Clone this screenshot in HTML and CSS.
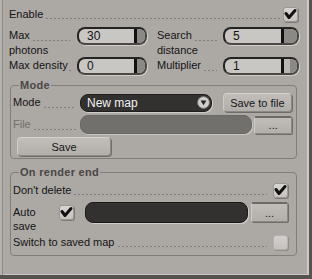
FILE: index.html
```html
<!DOCTYPE html>
<html>
<head>
<meta charset="utf-8">
<link rel="stylesheet" href="styles.css">
</head>
<body>
<div class="window">
  <div class="top">
    <div class="row enable-row">
      <span class="lbl">Enable</span><span class="leader lead-enable"></span>
      <span class="cb checked"><svg viewBox="0 0 15 15" width="15" height="15"><path d="M3 6.5 L6 10.5 L12 3.5" fill="none" stroke="#111" stroke-width="3" stroke-linejoin="round" stroke-linecap="round"/></svg></span>
    </div>
    <div class="grid">
      <div class="lbl2"><div class="l1"><span class="txt">Max</span><span class="leader lead-grid"></span></div><div class="l2">photons</div></div>
      <div class="spin spin-a"><span class="val">30</span><span class="bar"></span><span class="knob"></span></div>
      <div class="lbl2 col3"><div class="l1"><span class="txt">Search</span><span class="leader lead-grid"></span></div><div class="l2">distance</div></div>
      <div class="spin spin-b"><span class="val">5</span><span class="bar"></span><span class="knob"></span></div>

      <div class="lbl1"><span class="txt">Max density</span><span class="leader lead-grid"></span></div>
      <div class="spin spin-a"><span class="val">0</span><span class="bar"></span><span class="knob"></span></div>
      <div class="lbl1 col3"><span class="txt">Multiplier</span><span class="leader lead-grid"></span></div>
      <div class="spin spin-b"><span class="val">1</span><span class="bar"></span><span class="knob light"></span></div>
    </div>
  </div>

  <fieldset class="group mode-group">
    <legend>Mode</legend>
    <div class="grow">
      <div class="glabel"><span class="txt">Mode</span><span class="leader lead-g"></span></div>
      <div class="dropdown"><span class="dd-text">New map</span><span class="dd-arrow"><svg viewBox="0 0 13 13" width="13" height="13"><circle cx="6.5" cy="6.5" r="6" fill="#cfccc9" stroke="#6d6a67" stroke-width="1"/><path d="M3.6 4.6 L9.4 4.6 L6.5 9.2 Z" fill="#222"/></svg></span></div>
      <button class="btn btn-savefile">Save to file</button>
    </div>
    <div class="grow">
      <div class="glabel disabled"><span class="txt">File</span><span class="leader lead-g"></span></div>
      <div class="field field-file"></div>
      <button class="btn btn-dots">...</button>
    </div>
    <div class="grow">
      <button class="btn btn-save">Save</button>
    </div>
  </fieldset>

  <fieldset class="group end-group">
    <legend>On render end</legend>
    <div class="crow">
      <span class="txt">Don't delete</span><span class="leader lead-c"></span>
      <span class="cb checked"><svg viewBox="0 0 15 15" width="15" height="15"><path d="M3 6.5 L6 10.5 L12 3.5" fill="none" stroke="#111" stroke-width="3" stroke-linejoin="round" stroke-linecap="round"/></svg></span>
    </div>
    <div class="arow">
      <div class="alabel">Auto<br>save</div>
      <span class="cb checked cb-auto"><svg viewBox="0 0 15 15" width="15" height="15"><path d="M3 6.5 L6 10.5 L12 3.5" fill="none" stroke="#111" stroke-width="3" stroke-linejoin="round" stroke-linecap="round"/></svg></span>
      <div class="field field-dark"></div>
      <button class="btn btn-dots btn-dots2">...</button>
    </div>
    <div class="crow">
      <span class="txt">Switch to saved map</span><span class="leader lead-c"></span>
      <span class="cb unchecked"></span>
    </div>
  </fieldset>
</div>
</body>
</html>
```

FILE: styles.css
```css
html, body {
  margin: 0;
  padding: 0;
  background: #aca8a4;
}
body {
  font-family: "Liberation Sans", Arial, sans-serif;
  font-size: 11px;
  color: #141414;
}
.window {
  width: 312px;
  height: 279px;
  box-sizing: border-box;
  overflow: hidden;
  border-right: 3px solid #55524f;
  border-bottom: 4px solid #55524f;
  box-shadow: inset 2px 0 0 #b6b2ae, inset 3px 0 0 #8e8a86, inset -2px -1px 0 #cbc7c3;
}
.txt {
  flex: none;
  white-space: nowrap;
}
.top {
  padding: 7px 0 0 9px;
}
.row {
  display: flex;
  align-items: center;
  height: 15px;
  line-height: 15px;
}
.enable-row {
  width: 289px;
}
.leader {
  flex: 1;
  height: 1px;
  min-width: 4px;
  align-self: flex-end;
  background-image: repeating-linear-gradient(to right, #807d7a 0 2px, transparent 2px 4px);
}
.lead-enable {
  margin: 0 2px 3px 3px;
}
.cb {
  width: 15px;
  height: 15px;
  box-sizing: border-box;
  border-radius: 3px;
  display: inline-block;
  flex: none;
}
.cb svg {
  display: block;
  margin: -1px;
}
.cb.checked {
  background: linear-gradient(#d8d5d2, #c6c3c0);
  border: 1px solid #9a9793;
  box-shadow: 1px 1px 0 #7d7a77;
}
.cb.unchecked {
  background: linear-gradient(#d2cfcc, #c4c1be);
  border: 1px solid #b4b0ad;
  box-shadow: 1px 1px 0 #8f8c89;
}

.grid {
  display: grid;
  grid-template-columns: 68px 70px 76px 76px;
  grid-template-rows: 30px 18px;
  margin-top: 5px;
}
.lbl2 {
  line-height: 15px;
  margin-top: 1px;
}
.l1 {
  display: flex;
}
.lbl1 {
  display: flex;
  line-height: 15px;
  height: 15px;
  margin-top: 1px;
}
.lead-grid {
  margin: 0 7px 2px 3px;
}
.lbl1 .lead-grid {
  margin-left: 1px;
}
.col3 {
  padding-left: 10px;
}
.col3 .lead-grid {
  margin-right: 6px;
  margin-left: 3px;
}
.spin {
  height: 18px;
  box-sizing: border-box;
  border: 2px solid #252321;
  border-right-color: #4a4745;
  border-bottom-color: #4a4745;
  border-radius: 8px;
  background: #c9c7c4;
  display: flex;
  align-items: center;
  overflow: hidden;
  box-shadow: 1px 1px 0 #d0ccc8;
}
.val {
  flex: 1;
  padding-left: 8px;
  font-size: 12px;
  line-height: 14px;
}
.bar {
  width: 3px;
  height: 100%;
  background: #111;
  flex: none;
}
.knob {
  height: 100%;
  background: #8b8986;
  flex: none;
}
.spin-a .knob { width: 8px; }
.spin-b .knob { width: 13px; }
.knob.light {
  background: linear-gradient(to right, #b9b7b4 0 6px, #8b8986 6px);
}

.group {
  margin: 0 12px 0 10px;
  border: 1px solid #827f7b;
  border-radius: 4px;
  min-width: 0;
}
.group legend {
  font-weight: bold;
  color: #4a4744;
  letter-spacing: 0.3px;
  line-height: 13px;
  padding: 0 1px;
  margin-left: 6px;
}
.mode-group {
  margin-top: 4px;
  padding: 1px 4px 2px 2px;
}
.grow {
  display: flex;
  align-items: center;
  height: 19px;
  margin-bottom: 3px;
}
.grow:last-child {
  margin-bottom: 0;
}
.glabel {
  width: 67px;
  display: flex;
  line-height: 15px;
  flex: none;
}
.glabel.disabled {
  color: #706d6a;
}
.lead-g {
  margin: 0 4px 2px 3px;
}
.dropdown {
  width: 133px;
  height: 18px;
  box-sizing: border-box;
  background: #333130;
  border: 1px solid #1e1d1c;
  border-radius: 8px;
  display: flex;
  align-items: center;
  color: #f2f2f2;
  font-size: 12px;
  box-shadow: 1px 1px 0 #d0ccc8;
}
.dd-text {
  flex: 1;
  padding-left: 6px;
}
.dd-arrow {
  margin-right: 1px;
  height: 13px;
}
.dd-arrow svg {
  display: block;
}
.btn {
  font-family: "Liberation Sans", Arial, sans-serif;
  font-size: 11px;
  color: #161616;
  height: 19px;
  padding: 0;
  box-sizing: border-box;
  background: linear-gradient(#c1beba, #b2afab);
  border: 1px solid #8c8985;
  border-top-color: #d4d1cd;
  border-left-color: #cfccc8;
  border-radius: 4px;
  box-shadow: 1px 1px 0 #6f6c69;
}
.btn-savefile {
  width: 70px;
  margin-left: 11px;
}
.field {
  box-sizing: border-box;
  border-radius: 8px;
}
.field-file {
  width: 174px;
  height: 19px;
  background: #72706d;
  border: 1px solid #6a6865;
  box-shadow: 1px 1px 0 #c8c4c0;
}
.btn-dots {
  width: 38px;
  margin-left: 2px;
  height: 18px;
  border-top: 2px solid #6d6a67;
  border-radius: 2px;
  line-height: 10px;
}
.btn-save {
  width: 94px;
  margin-left: 4px;
}
.end-group {
  margin-top: 7px;
  padding: 3px 8px 5px 2px;
}
.crow {
  display: flex;
  align-items: center;
  height: 16px;
  line-height: 15px;
}
.lead-c {
  margin: 0 6px 3px 3px;
}
.arow {
  display: flex;
  align-items: flex-start;
  height: 32px;
  margin-top: 4px;
}
.alabel {
  width: 46px;
  line-height: 13.5px;
  margin-top: 4px;
  flex: none;
}
.cb-auto {
  margin-top: 3px;
}
.field-dark {
  width: 168px;
  height: 21px;
  margin-left: 11px;
  background: #33312f;
  border: 1px solid #1b1a19;
  box-shadow: 1px 1px 0 #d0ccc8;
}
.btn-dots2 {
  margin-left: 3px;
  height: 20px;
}
```
